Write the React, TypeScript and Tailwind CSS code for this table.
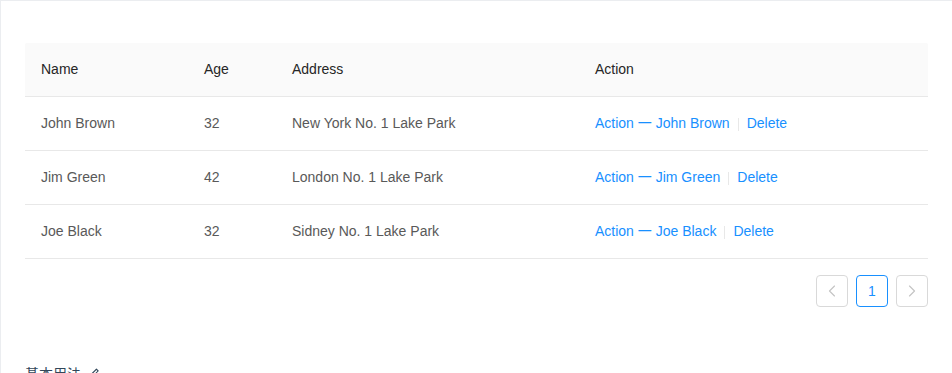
import React from "react";
import { AiOutlineEdit } from "react-icons/ai";
import { LuChevronLeft, LuChevronRight } from "react-icons/lu";

const rows = [
  { key: "1", name: "John Brown", age: 32, address: "New York No. 1 Lake Park" },
  { key: "2", name: "Jim Green", age: 42, address: "London No. 1 Lake Park" },
  { key: "3", name: "Joe Black", age: 32, address: "Sidney No. 1 Lake Park" },
];

const font = {
  fontFamily: '"Liberation Sans", Arial, "Noto Sans CJK SC", sans-serif',
};

const App = () => {
  return (
    <div className="min-h-screen bg-white text-sm" style={font}>
      <div className="border-l border-t border-[#ebedf0] px-6 pt-[42px]">
        <table className="w-full table-fixed border-collapse text-left">
          <colgroup>
            <col className="w-[163px]" />
            <col className="w-[88px]" />
            <col className="w-[303px]" />
            <col className="w-[349px]" />
          </colgroup>
          <thead>
            <tr className="bg-[#fafafa]">
              <th className="rounded-tl-[2px] border-b border-[#e8e8e8] px-4 py-4 font-normal leading-[21px] text-[#262626]">
                Name
              </th>
              <th className="border-b border-[#e8e8e8] px-4 py-4 font-normal leading-[21px] text-[#262626]">
                Age
              </th>
              <th className="border-b border-[#e8e8e8] px-4 py-4 font-normal leading-[21px] text-[#262626]">
                Address
              </th>
              <th className="rounded-tr-[2px] border-b border-[#e8e8e8] px-4 py-4 font-normal leading-[21px] text-[#262626]">
                Action
              </th>
            </tr>
          </thead>
          <tbody>
            {rows.map((r) => (
              <tr key={r.key}>
                <td className="border-b border-[#e8e8e8] px-4 py-4 leading-[21px] text-[#595959]">
                  {r.name}
                </td>
                <td className="border-b border-[#e8e8e8] px-4 py-4 leading-[21px] text-[#595959]">
                  {r.age}
                </td>
                <td className="border-b border-[#e8e8e8] px-4 py-4 leading-[21px] text-[#595959]">
                  {r.address}
                </td>
                <td className="border-b border-[#e8e8e8] px-4 py-4 leading-[21px] text-[#595959]">
                  <a className="cursor-pointer text-[#1890ff]">
                    Action 一 {r.name}
                  </a>
                  <span className="mx-2 inline-block h-[0.9em] w-px bg-[#e8e8e8] align-middle" />
                  <a className="cursor-pointer text-[#1890ff]">Delete</a>
                </td>
              </tr>
            ))}
          </tbody>
        </table>

        <div className="mt-4 flex justify-end gap-2">
          <button className="flex h-8 w-8 items-center justify-center rounded border border-[#d9d9d9] text-[#c4c4c4]">
            <LuChevronLeft size={20} strokeWidth={1.4} />
          </button>
          <button className="flex h-8 w-8 items-center justify-center rounded border border-[#1890ff] text-[#1890ff]">
            1
          </button>
          <button className="flex h-8 w-8 items-center justify-center rounded border border-[#d9d9d9] text-[#c4c4c4]">
            <LuChevronRight size={20} strokeWidth={1.4} />
          </button>
        </div>

        <div className="mt-[56px] flex items-center gap-1.5 leading-[22px] text-[#314659]">
          <span>基本用法</span>
          <AiOutlineEdit size={14} />
        </div>
      </div>
    </div>
  );
};

export default App;
